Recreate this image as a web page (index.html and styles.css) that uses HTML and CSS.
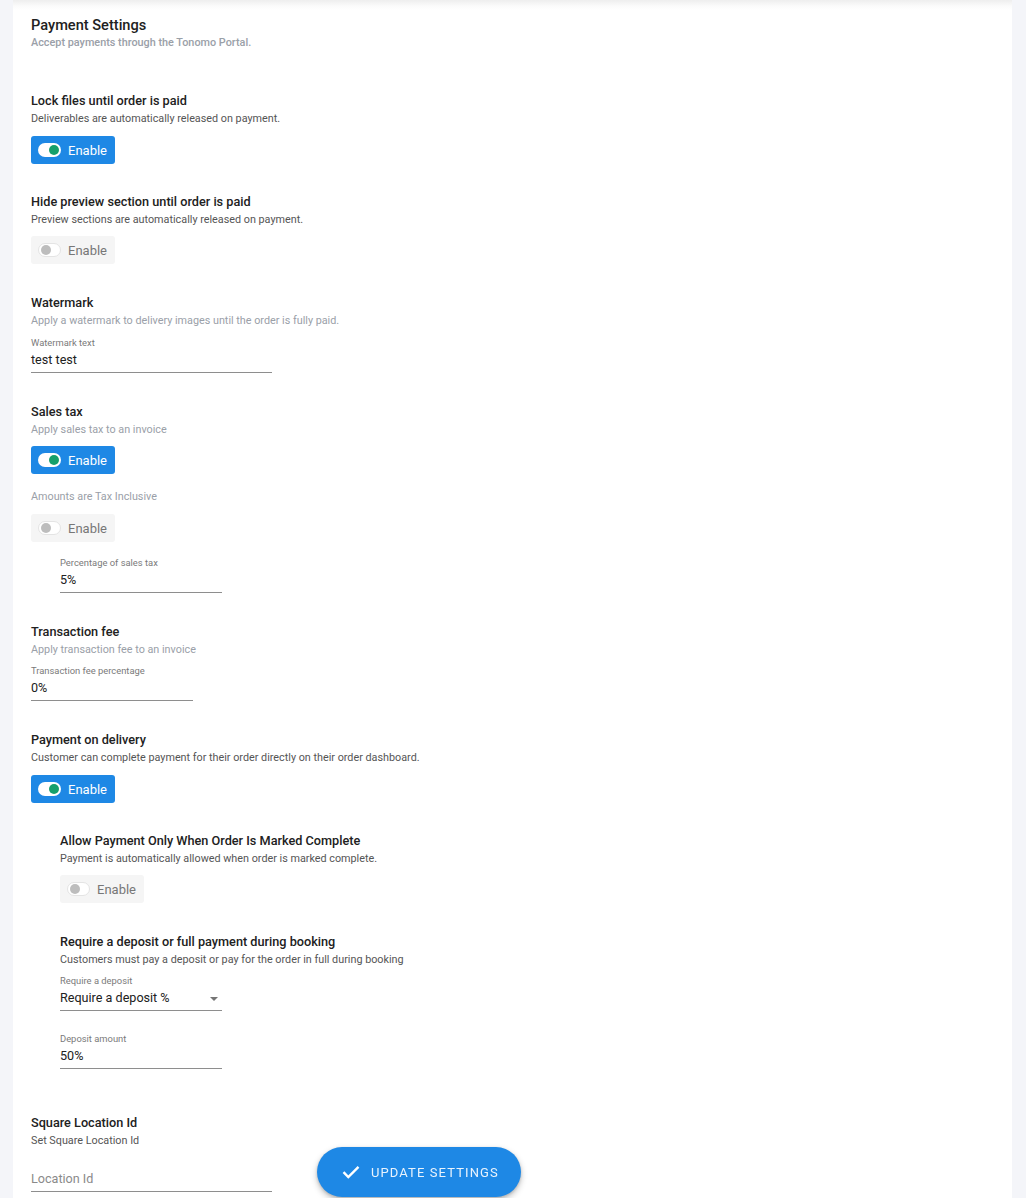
FILE: index.html
```html
<!DOCTYPE html>
<html lang="en">
<head>
<meta charset="utf-8">
<title>Payment Settings</title>
<link rel="stylesheet" href="styles.css">
</head>
<body>
<main class="card">
  <header class="head">
    <h1 class="page-title">Payment Settings</h1>
    <p class="page-sub">Accept payments through the Tonomo Portal.</p>
  </header>

  <section class="sec s-lock">
    <h2 class="title">Lock files until order is paid</h2>
    <p class="desc">Deliverables are automatically released on payment.</p>
    <button class="tgl on b-lock"><span class="track"><span class="knob"></span></span>Enable</button>
  </section>

  <section class="sec s-hide">
    <h2 class="title">Hide preview section until order is paid</h2>
    <p class="desc">Preview sections are automatically released on payment.</p>
    <button class="tgl off b-hide"><span class="track"><span class="knob"></span></span>Enable</button>
  </section>

  <section class="sec s-wm">
    <h2 class="title">Watermark</h2>
    <p class="desc light">Apply a watermark to delivery images until the order is fully paid.</p>
    <label class="lbl l-wm">Watermark text</label>
    <div class="field w241">test test</div>
  </section>

  <section class="sec s-tax">
    <h2 class="title">Sales tax</h2>
    <p class="desc light">Apply sales tax to an invoice</p>
    <button class="tgl on b-tax"><span class="track"><span class="knob"></span></span>Enable</button>
    <p class="desc light d-incl">Amounts are Tax Inclusive</p>
    <button class="tgl off b-incl"><span class="track"><span class="knob"></span></span>Enable</button>
    <div class="indent">
      <label class="lbl l-pct">Percentage of sales tax</label>
      <div class="field w162">5%</div>
    </div>
  </section>

  <section class="sec s-fee">
    <h2 class="title">Transaction fee</h2>
    <p class="desc light">Apply transaction fee to an invoice</p>
    <label class="lbl l-fee">Transaction fee percentage</label>
    <div class="field w162">0%</div>
  </section>

  <section class="sec s-pod">
    <h2 class="title">Payment on delivery</h2>
    <p class="desc">Customer can complete payment for their order directly on their order dashboard.</p>
    <button class="tgl on b-pod"><span class="track"><span class="knob"></span></span>Enable</button>
    <div class="indent">
      <div class="sub s-allow">
        <h2 class="title">Allow Payment Only When Order Is Marked Complete</h2>
        <p class="desc">Payment is automatically allowed when order is marked complete.</p>
        <button class="tgl off b-allow"><span class="track"><span class="knob"></span></span>Enable</button>
      </div>
      <div class="sub s-dep">
        <h2 class="title">Require a deposit or full payment during booking</h2>
        <p class="desc">Customers must pay a deposit or pay for the order in full during booking</p>
        <label class="lbl l-dep">Require a deposit</label>
        <div class="field w162 select">Require a deposit %<span class="caret"></span></div>
        <label class="lbl l-amt">Deposit amount</label>
        <div class="field w162">50%</div>
      </div>
    </div>
  </section>

  <section class="sec s-sq">
    <h2 class="title">Square Location Id</h2>
    <p class="desc">Set Square Location Id</p>
    <div class="field w241 ph">Location Id</div>
  </section>
</main>

<button class="fab">
  <svg class="check" width="18" height="14" viewBox="0 0 18 14"><path d="M1.5 7.2 L6.3 12 L16.5 1.8" fill="none" stroke="#fff" stroke-width="2.4"/></svg>
  <span>UPDATE SETTINGS</span>
</button>
</body>
</html>
```

FILE: styles.css
```css
* { box-sizing: border-box; }
html, body { margin: 0; padding: 0; }
body {
  background: #f4f5f9;
  font-family: Roboto, "Liberation Sans", Arial, sans-serif;
  color: #212121;
  height: 1198px;
  overflow: hidden;
}
.card {
  margin-left: 13px;
  width: 999px;
  min-height: 1198px;
  background: linear-gradient(#eeeeee 0, #fbfbfb 6px, #ffffff 10px);
  padding: 0 18px;
}
.head { padding-top: 16px; }
h1, h2, p { margin: 0; }
.page-title { font-size: 14.6px; line-height: 18px; font-weight: 500; color: #212121; }
.page-sub { margin-top: 2px; font-size: 10.85px; line-height: 14px; font-weight: 500; color: #9aa0a8; }

.title { font-size: 12.7px; line-height: 16px; font-weight: 500; color: #212121; }
.desc { margin-top: 3px; font-size: 10.8px; line-height: 14px; color: #555; }
.desc.light { color: #9aa0a8; }

.sec { margin-top: 30px; }
.s-lock { margin-top: 43px; }
.s-hide { margin-top: 30px; }
.s-wm { margin-top: 31px; }
.s-tax { margin-top: 31px; }
.s-fee { margin-top: 31px; }
.s-pod { margin-top: 31px; }
.s-sq { margin-top: 46px; }

.tgl {
  display: flex;
  align-items: center;
  gap: 7px;
  width: 84px;
  height: 28px;
  margin-top: 10px;
  padding: 0 0 0 7px;
  border: none;
  border-radius: 3px;
  font-family: inherit;
  font-size: 13px;
  cursor: pointer;
}
.tgl.on { background: #1e88e5; color: #fff; }
.tgl.off { background: #f5f5f5; color: #777; }
.b-lock { margin-top: 10px; }
.b-hide { margin-top: 9px; }
.b-tax { margin-top: 9px; }
.b-incl { margin-top: 10px; }
.b-pod { margin-top: 10px; }
.b-allow { margin-top: 9px; }

.track {
  position: relative;
  width: 23px;
  height: 14px;
  border-radius: 7px;
  background: #fff;
  flex: none;
}
.tgl.off .track { border: 1px solid #e4e4e4; }
.knob {
  position: absolute;
  top: 2px;
  width: 10px;
  height: 10px;
  border-radius: 50%;
}
.tgl.on .knob { right: 2px; background: #16a06c; }
.tgl.off .knob { left: 2px; top: 1px; background: #bdbdbd; }

.d-incl { margin-top: 16px; }

.lbl { display: block; font-size: 9.4px; line-height: 11px; color: #7a7a7a; }
.l-wm { margin-top: 9px; }
.l-pct { margin-top: 15px; }
.l-fee { margin-top: 8px; }
.l-dep { margin-top: 8px; }
.l-amt { margin-top: 22px; }

.field {
  position: relative;
  height: 25px;
  padding-top: 1px;
  font-size: 12.6px;
  line-height: 22px;
  color: #212121;
  border-bottom: 1px solid #8e8e8e;
}
.w241 { width: 241px; }
.w162 { width: 162px; }
.ph { margin-top: 19px; color: #8a8a8a; }
.caret {
  position: absolute;
  right: 4px;
  top: 11px;
  width: 0;
  height: 0;
  border-left: 4px solid transparent;
  border-right: 4px solid transparent;
  border-top: 4px solid #757575;
}

.indent { padding-left: 29px; }
.sub.s-allow { margin-top: 30px; }
.sub.s-dep { margin-top: 31px; }

.fab {
  position: fixed;
  left: 317px;
  bottom: 1px;
  width: 204px;
  height: 50px;
  border: none;
  border-radius: 25px;
  background: #1e88e5;
  color: #e9f3fd;
  font-family: inherit;
  font-size: 13px;
  letter-spacing: 1.1px;
  display: flex;
  align-items: center;
  padding-left: 25px;
  gap: 11px;
  box-shadow: 0 3px 6px rgba(0,0,0,0.25), 0 1px 3px rgba(0,0,0,0.15);
  cursor: pointer;
}
.check { flex: none; }
```
